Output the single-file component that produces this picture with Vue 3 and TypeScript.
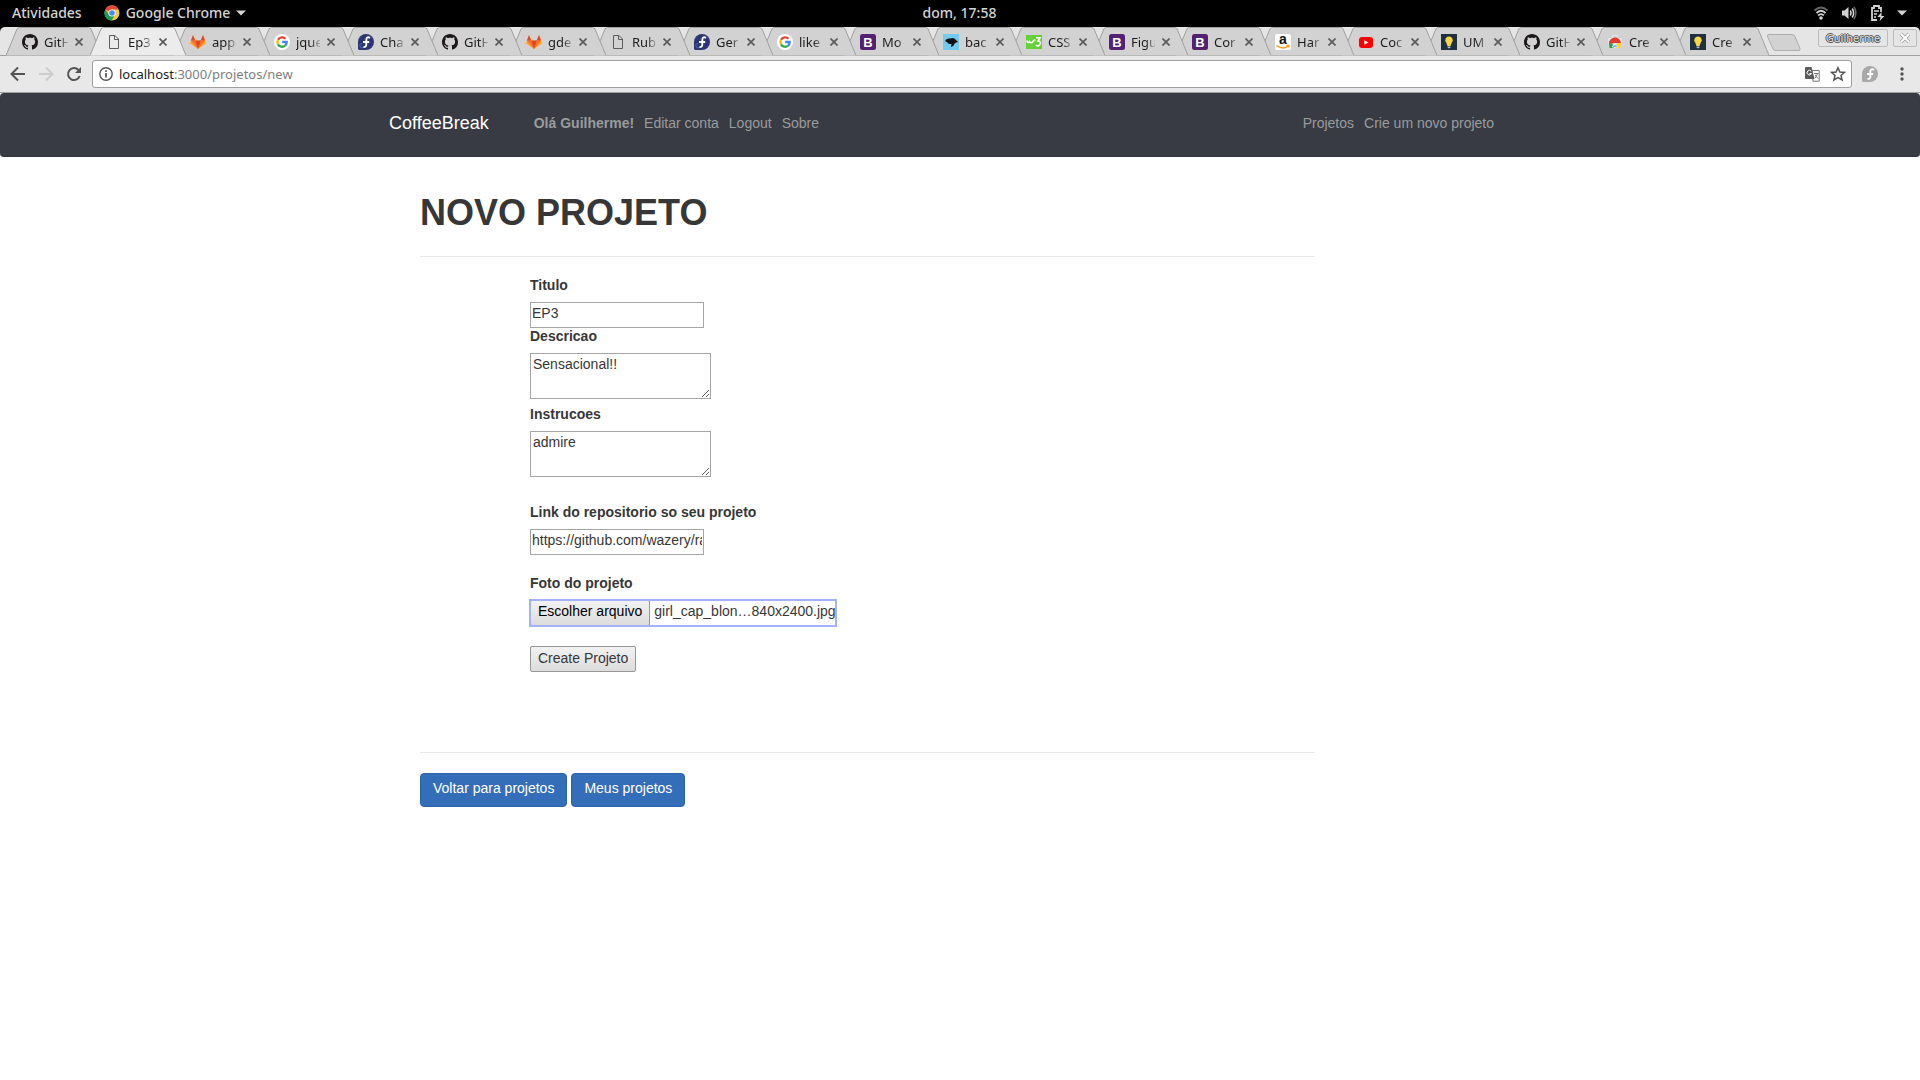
<script setup lang="ts">
import { ref } from 'vue'

type Icon =
  | 'github' | 'file' | 'gitlab' | 'google' | 'fedora' | 'bootstrap' | 'react'
  | 'w3' | 'amazon' | 'youtube' | 'bulb' | 'store'

interface Tab {
  icon: Icon
  title: string
  active?: boolean
}

const tabs: Tab[] = [
  { icon: 'github', title: 'GitH' },
  { icon: 'file', title: 'Ep3', active: true },
  { icon: 'gitlab', title: 'app' },
  { icon: 'google', title: 'jque' },
  { icon: 'fedora', title: 'Cha' },
  { icon: 'github', title: 'GitH' },
  { icon: 'gitlab', title: 'gde' },
  { icon: 'file', title: 'Rub' },
  { icon: 'fedora', title: 'Ger' },
  { icon: 'google', title: 'like' },
  { icon: 'bootstrap', title: 'Mo' },
  { icon: 'react', title: 'bac' },
  { icon: 'w3', title: 'CSS' },
  { icon: 'bootstrap', title: 'Figu' },
  { icon: 'bootstrap', title: 'Cor' },
  { icon: 'amazon', title: 'Har' },
  { icon: 'youtube', title: 'Coc' },
  { icon: 'bulb', title: 'UM' },
  { icon: 'github', title: 'GitH' },
  { icon: 'store', title: 'Cre' },
  { icon: 'bulb', title: 'Cre' },
]

const titulo = ref('EP3')
const descricao = ref('Sensacional!!')
const instrucoes = ref('admire')
const link = ref('https://github.com/wazery/ratyrate')
const foto = ref('girl_cap_blon…840x2400.jpg')

function escolher(event: Event) {
  const file = (event.target as HTMLInputElement).files?.[0]
  if (file) foto.value = file.name
}
</script>

<template>
  <div class="desktop">
    <header class="topbar">
      <div class="topbar-side">
        <button type="button" class="top-item">Atividades</button>
        <button type="button" class="top-item app-menu">
          <svg width="16" height="16" viewBox="0 0 16 16">
            <circle cx="8" cy="8" r="7.5" fill="#f5c842" />
            <path d="M8 8 1.2 4.5A7.5 7.5 0 0 1 14.6 4.5H8z" fill="#dd4b3e" />
            <path d="M1.3 4.4A7.5 7.5 0 0 0 7.6 15.5L11 9.8 5 9.5z" fill="#1d9b58" />
            <circle cx="8" cy="8" r="3.6" fill="#fff" />
            <circle cx="8" cy="8" r="2.8" fill="#4a87ee" />
          </svg>
          Google Chrome
          <svg width="10" height="6" viewBox="0 0 10 6"><path d="M0 .5h10L5 5.5z" fill="#d3d3d3" /></svg>
        </button>
      </div>
      <time class="clock">dom, 17:58</time>
      <div class="topbar-side status">
        <svg width="16" height="16" viewBox="0 0 16 16" fill="none" stroke="#d3d3d3" stroke-width="1.8">
          <path d="M1.5 5.5Q8-.5 14.5 5.5" stroke="#666" />
          <path d="M3.500 8Q8 3.500 12.500 8M5.200 10.500Q8 7.800 10.800 10.500" />
          <circle cx="8" cy="13" r="1.8" fill="#d3d3d3" stroke="none" />
        </svg>
        <svg width="16" height="16" viewBox="0 0 16 16" fill="none" stroke-width="1.6">
          <path d="M1 5.500h2.500L7.500 2v12L3.500 10.500H1z" fill="#d3d3d3" />
          <path d="M9.300 5.500q1.500 2.500 0 5M11.200 3.500q2.800 4.500 0 9" stroke="#d3d3d3" />
          <path d="M13 1.800q3.600 6 0 12.400" stroke="#666" />
        </svg>
        <svg width="16" height="16" viewBox="0 0 16 16" fill="none" stroke="#d3d3d3" stroke-width="1.8">
          <path d="M12 7V3H10V1H5V3H3V15H8" /><path d="M5 6H10M5 9H8M5 12H7" stroke-width="1.5" />
          <path d="M12.500 7 8.500 12h3l-.8 4L15.500 11h-3z" fill="#d3d3d3" stroke="none" />
        </svg>
        <svg width="10" height="6" viewBox="0 0 10 6"><path d="M0 .5h10L5 5.5z" fill="#d3d3d3" /></svg>
      </div>
    </header>

    <div class="browser">
      <div class="strip">
        <div class="tabs">
          <div
            v-for="(tab, i) in tabs"
            :key="i"
            class="tab"
            :class="{ active: tab.active }"
            :style="{ zIndex: tab.active ? 50 : 30 - i }"
          >
            <svg class="shape" viewBox="0 0 96 29" preserveAspectRatio="none">
              <path d="M0 28.500 11 2Q12 .5 13.500 .5H82.500Q84 .5 85 2L96 28.500" />
            </svg>
            <svg class="favicon" width="16" height="16" viewBox="0 0 16 16">
              <path
                v-if="tab.icon === 'github'"
                fill="#1b1817"
                d="M8 0C3.580 0 0 3.580 0 8c0 3.540 2.290 6.530 5.470 7.590.4.070.55-.17.55-.38 0-.19-.01-.82-.01-1.490-2.010.37-2.530-.49-2.690-.94-.09-.23-.48-.94-.82-1.130-.28-.15-.68-.52-.01-.53.63-.01 1.080.58 1.230.82.72 1.210 1.870.87 2.330.66.070-.52.28-.87.51-1.070-1.780-.2-3.640-.89-3.640-3.950 0-.87.31-1.590.82-2.150-.08-.2-.36-1.020.080-2.120 0 0 .67-.21 2.200.82.64-.18 1.320-.27 2-.27.68 0 1.360.090 2 .27 1.530-1.040 2.200-.82 2.200-.82.44 1.100.16 1.920.080 2.120.51.56.82 1.270.82 2.150 0 3.070-1.870 3.750-3.650 3.950.29.25.54.73.54 1.480 0 1.070-.01 1.930-.01 2.200 0 .21.15.46.55.38A8.013 8.013 0 0 0 16 8c0-4.420-3.580-8-8-8z"
              />
              <path
                v-else-if="tab.icon === 'file'"
                d="M3.500 1.500H9L12.500 5V14.500H3.500zM8.500 1.500V5.500H12.500"
                fill="none"
                stroke="#5d5d5d"
              />
              <g v-else-if="tab.icon === 'gitlab'">
                <path d="M8 15 0 9.200 3 1 5.200 6.500H10.800L13 1 16 9.200z" fill="#fca326" />
                <path d="M8 15 1 6.500H5.200zM8 15 15 6.500H10.800z" fill="#fc6d26" />
                <path d="M8 15 5.200 6.500H10.800zM3 1 5.200 6.500H1zM13 1 10.800 6.500H15z" fill="#e2432a" />
              </g>
              <g v-else-if="tab.icon === 'google'">
                <circle cx="8" cy="8" r="8" fill="#fff" />
                <g fill="none" stroke-width="2.3">
                  <path d="M4 5.700A4.700 4.700 0 0 1 11.500 4.800" stroke="#ea4335" />
                  <path d="M4 5.700A4.700 4.700 0 0 0 4 10.400" stroke="#fbbc05" />
                  <path d="M4 10.400A4.700 4.700 0 0 0 11.100 11.600" stroke="#34a853" />
                  <path d="M8.200 8H12.700Q12.700 10.400 11.100 11.600" stroke="#4285f4" />
                </g>
              </g>
              <g v-else-if="tab.icon === 'fedora'">
                <path d="M8 0A8 8 0 0 1 8 16H1.500Q0 16 0 14.500V8A8 8 0 0 1 8 0z" fill="#2c3572" />
                <path d="M4 9.300A2.300 2.300 0 1 0 6 13" fill="none" stroke="#4a73b5" />
                <path d="M12 3.800Q8.300 2 8.300 6V10.500Q8.300 13.300 5.500 12.800M5 8H11.200" fill="none" stroke="#fff" stroke-width="1.9" />
              </g>
              <g v-else-if="tab.icon === 'bootstrap'">
                <rect width="16" height="16" rx="2.5" fill="#542070" />
                <text x="8" y="12.5" text-anchor="middle" class="logo-b">B</text>
              </g>
              <g v-else-if="tab.icon === 'react'">
                <rect width="16" height="16" fill="#73caf1" />
                <path d="M2 7Q3 4 7 4.500 11 3 13 6L15 8 12 9Q11 12 8 13L8.500 10Q5 10 4.500 8.500z" fill="#111" />
              </g>
              <g v-else-if="tab.icon === 'w3'">
                <rect width="16" height="14" y="1" fill="#67d13a" />
                <path d="M.8 6.500Q2 10 3.600 7.500Q5 10 7 7.500T9 6.500" fill="none" stroke="#fff" stroke-width="1.6" />
                <path d="M10 3.800H14L12 7Q14.800 7.200 14.300 9.800Q13 13 9.800 11.200" fill="none" stroke="#fff" stroke-width="1.6" />
              </g>
              <g v-else-if="tab.icon === 'amazon'">
                <rect width="16" height="16" rx="2" fill="#fff" />
                <text x="8" y="10" text-anchor="middle" class="logo-a">a</text>
                <path d="M1.500 11.500Q8 16 13 12.500M11.500 11.500H14V13.500" fill="none" stroke="#f79a1c" stroke-width="1.4" />
              </g>
              <g v-else-if="tab.icon === 'youtube'">
                <rect x="1" y="3" width="14" height="11" rx="3" fill="#f00" />
                <path d="M6.300 6.200 10.500 8.500 6.300 10.800z" fill="#fff" />
              </g>
              <g v-else-if="tab.icon === 'bulb'">
                <rect width="16" height="16" fill="#20303f" />
                <path d="M8 2.500A3.600 3.600 0 0 1 10.800 8.500L9.500 12H6.500L5.200 8.500A3.600 3.600 0 0 1 8 2.500z" fill="#f7d547" />
                <path d="M6.500 12.500H9.500V13.500L8 14.500 6.500 13.500z" fill="#b9bec2" />
              </g>
              <g v-else>
                <path d="M1 4H15L14 14H2z" fill="#e8e8e8" />
                <path d="M5.500 4V1.500H10.500V4" fill="none" stroke="#e8e8e8" />
                <path d="M2 10A6 6 0 0 1 14 9H8z" fill="#e03c31" />
                <path d="M2 10 2.500 14H7L5 9z" fill="#26a148" />
                <path d="M14 9 13.500 14H8L10 9z" fill="#fbd12b" />
                <path d="M5 13A3.200 3.200 0 0 1 11 13z" fill="#4a80f0" stroke="#fff" stroke-width=".7" />
              </g>
            </svg>
            <span class="tab-title">{{ tab.title }}</span>
            <button type="button" class="tab-close" aria-label="Fechar">
              <svg width="8" height="8" viewBox="0 0 8 8"><path d="M.5.5 7.500 7.500M7.500.5.5 7.500" stroke="#5b5b5b" stroke-width="1.7" /></svg>
            </button>
          </div>
          <button type="button" class="new-tab" aria-label="Nova guia">
            <svg width="36" height="18" viewBox="0 0 36 18">
              <path d="M3 .5H26Q28 .5 29 2.500L34 14.500Q34.500 16.500 33 16.500H10Q8 16.500 7 15L1.500 2.500Q1 .5 3 .5z" fill="#d2d2d2" stroke="#adadad" />
            </svg>
          </button>
        </div>
        <div class="window-controls">
          <button type="button" class="profile">Guilherme</button>
          <button type="button" class="win-close" aria-label="Fechar janela">
            <svg width="12" height="12" viewBox="0 0 12 12">
              <path d="M2 2 10 10M10 2 2 10" stroke="#a4a4a4" stroke-width="3.6" />
              <path d="M2 2 10 10M10 2 2 10" stroke="#fff" stroke-width="1.8" />
            </svg>
          </button>
        </div>
      </div>

      <div class="toolbar">
        <button type="button" class="tool" aria-label="Voltar">
          <svg width="16" height="16" viewBox="0 0 16 16"><path d="M15 8H2M8 1.500 1.500 8 8 14.500" fill="none" stroke="#545454" stroke-width="2" /></svg>
        </button>
        <button type="button" class="tool" aria-label="Avançar">
          <svg width="16" height="16" viewBox="0 0 16 16"><path d="M1 8H14M8 1.500 14.500 8 8 14.500" fill="none" stroke="#cdcdcd" stroke-width="2" /></svg>
        </button>
        <button type="button" class="tool" aria-label="Recarregar">
          <svg width="16" height="16" viewBox="0 0 16 16">
            <path d="M13.700 10A6 6 0 1 1 12.500 4" fill="none" stroke="#545454" stroke-width="2" />
            <path d="M15 1V7H9z" fill="#545454" />
          </svg>
        </button>
        <div class="omnibox">
          <svg width="14" height="14" viewBox="0 0 14 14">
            <circle cx="7" cy="7" r="6.2" fill="none" stroke="#555" stroke-width="1.4" />
            <path d="M7 6V10.500M7 3.300V5" stroke="#555" stroke-width="1.7" />
          </svg>
          <div class="url"><span class="host">localhost</span>:3000/projetos/new</div>
          <button type="button" class="plain" aria-label="Traduzir">
            <svg width="15" height="15" viewBox="0 0 15 15">
              <path d="M7 3.500H14.200V14.200H8z" fill="#fff" stroke="#777" />
              <path d="M1 0H6.500L9.500 12H1Q0 12 0 11V1Q0 0 1 0z" fill="#5b5b5b" />
              <path d="M6.300 4.400A2.300 2.300 0 1 0 6.500 6.500H4.500" fill="none" stroke="#fff" />
              <path d="M9 6.500H13.500M12.500 6.500Q12 9 10 11M10 8 13 11.500" fill="none" stroke="#777" />
            </svg>
          </button>
          <button type="button" class="plain" aria-label="Favoritos">
            <svg width="16" height="16" viewBox="0 0 16 16">
              <path d="M8 1.700 9.900 6 14.500 6.400 11 9.500 12.100 14 8 11.600 3.900 14 5 9.500 1.500 6.400 6.100 6z" fill="none" stroke="#555" stroke-width="1.5" />
            </svg>
          </button>
        </div>
        <button type="button" class="plain" aria-label="Fedora">
          <svg width="16" height="16" viewBox="0 0 16 16">
            <path d="M8 0A8 8 0 0 1 8 16H1.500Q0 16 0 14.500V8A8 8 0 0 1 8 0z" fill="#a9a9a9" />
            <path d="M12 3.800Q8.300 2 8.300 6V10.500Q8.300 13.300 5.500 12.800M5 8H11.200" fill="none" stroke="#fff" stroke-width="1.9" />
          </svg>
        </button>
        <button type="button" class="plain menu" aria-label="Menu">
          <svg width="4" height="14" viewBox="0 0 4 14" fill="#555">
            <circle cx="2" cy="2" r="1.7" /><circle cx="2" cy="7" r="1.7" /><circle cx="2" cy="12" r="1.7" />
          </svg>
        </button>
      </div>
    </div>

    <div class="page">
      <nav class="navbar">
        <div class="container nav-row">
          <a href="#" class="brand">CoffeeBreak</a>
          <div class="nav-links">
            <a href="#"><strong>Olá Guilherme!</strong></a>
            <a href="#">Editar conta</a>
            <a href="#">Logout</a>
            <a href="#">Sobre</a>
          </div>
          <div class="nav-links right">
            <a href="#">Projetos</a>
            <a href="#">Crie um novo projeto</a>
          </div>
        </div>
      </nav>

      <main class="container">
        <div class="content">
          <h1>NOVO PROJETO</h1>
          <hr />
          <form class="form" @submit.prevent>
            <div class="field tight">
              <label for="titulo">Titulo</label>
              <input id="titulo" v-model="titulo" type="text" class="text" />
            </div>
            <div class="field">
              <label for="descricao">Descricao</label>
              <textarea id="descricao" v-model="descricao"></textarea>
            </div>
            <div class="field wide">
              <label for="instrucoes">Instrucoes</label>
              <textarea id="instrucoes" v-model="instrucoes"></textarea>
            </div>
            <div class="field link">
              <label for="link">Link do repositorio so seu projeto</label>
              <input id="link" v-model="link" type="text" class="text" />
            </div>
            <div class="field photo">
              <label for="foto">Foto do projeto</label>
              <div class="file">
                <span class="file-button">Escolher arquivo</span>
                <span class="file-name">{{ foto }}</span>
                <input id="foto" type="file" @change="escolher" />
              </div>
            </div>
            <button type="submit" class="submit">Create Projeto</button>
          </form>
          <hr />
          <div class="actions">
            <a href="#" class="btn">Voltar para projetos</a>
            <a href="#" class="btn">Meus projetos</a>
          </div>
        </div>
      </main>
    </div>
  </div>
</template>

<style>
body {
  margin: 0;
  background: #fff;
}
</style>

<style scoped>
* {
  box-sizing: border-box;
}
.desktop {
  min-height: 100vh;
  overflow-x: hidden;
  font-family: "Liberation Sans", Arial, sans-serif;
  font-size: 14px;
  line-height: 20px;
  color: #373737;
}
svg {
  display: block;
  flex: none;
}
button {
  margin: 0;
  padding: 0;
  border: 0;
  background: none;
  font: inherit;
  color: inherit;
}
.topbar {
  display: flex;
  align-items: center;
  height: 27px;
  padding: 0 13px 2px 12px;
  background: #000;
  color: #d3d3d3;
  font-family: "Noto Sans", sans-serif;
  font-weight: 500;
}
.topbar-side {
  flex: 1;
  display: flex;
  align-items: center;
  gap: 22px;
}
.app-menu {
  display: flex;
  align-items: center;
  gap: 6px;
}
.status {
  justify-content: flex-end;
  gap: 12px;
}
.browser {
  background: #000;
  font-family: "Noto Sans", sans-serif;
  font-size: 13px;
}
.strip {
  display: flex;
  justify-content: space-between;
  height: 29px;
  padding: 0 3px 0 6px;
  border-bottom: 1px solid #a0a0a0;
  border-radius: 5px 5px 0 0;
  background: #e5e5e5;
  color: #1c1c1c;
}
.tabs {
  display: flex;
}
.tab {
  position: relative;
  display: flex;
  align-items: center;
  flex: none;
  width: 83px;
  height: 29px;
  padding: 1px 0 0 16px;
}
.tab:nth-child(-n + 8) {
  width: 84px;
}
.shape {
  position: absolute;
  top: 0;
  left: 0;
  width: calc(100% + 12px);
  height: 29px;
  fill: #d2d2d2;
  stroke: #9f9f9f;
}
.active .shape {
  fill: #ececec;
}
.favicon {
  position: relative;
}
.logo-b {
  font: bold 13px "Liberation Sans", sans-serif;
  fill: #fff;
}
.logo-a {
  font: bold 14px "Liberation Sans", sans-serif;
  fill: #111;
}
.tab-title {
  position: relative;
  flex: none;
  width: 24px;
  margin: 0 7px 0 6px;
  overflow: hidden;
  white-space: nowrap;
  mask-image: linear-gradient(to right, #000 60%, rgba(0, 0, 0, 0.2));
}
.tab-close {
  position: relative;
}
.new-tab {
  position: relative;
  align-self: flex-start;
  margin: 7px 0 0 9px;
}
.window-controls {
  display: flex;
  gap: 5px;
  padding-top: 2px;
}
.profile,
.win-close {
  display: flex;
  align-items: center;
  justify-content: center;
  height: 18px;
  border: 1px solid #bcbcbc;
  border-radius: 2px;
}
.profile {
  width: 70px;
  font-size: 11px;
  color: #ddd;
  text-shadow: 1px 0 #555, -1px 0 #555, 0 1px #555, 0 -1px #555;
}
.win-close {
  width: 24px;
}
.toolbar {
  display: flex;
  align-items: center;
  height: 37px;
  padding: 0 16px 0 10px;
  border-bottom: 1px solid #a0a0a0;
  background: #e8e8e8;
}
.tool {
  margin-right: 12px;
}
.tool:nth-child(3) {
  margin-right: 10px;
}
.omnibox {
  flex: 1;
  display: flex;
  align-items: center;
  height: 28px;
  margin-right: 10px;
  padding: 0 5px 0 6px;
  border: 1px solid #a0a0a0;
  border-radius: 3px;
  background: #fff;
}
.url {
  flex: 1;
  margin-left: 6px;
  color: #808080;
}
.host {
  color: #1c1c1c;
}
.plain + .plain {
  margin-left: 10px;
}
.toolbar > .menu {
  margin-left: 22px;
}
.page {
  background: #fff;
}
.navbar {
  height: 64px;
  border-bottom: 1px solid #30343b;
  border-radius: 4px;
  background: #383b43;
}
.container {
  max-width: 1170px;
  margin: 0 auto;
  padding: 0 15px;
}
.nav-row {
  display: flex;
  align-items: center;
  padding: 20px 15px 0 14px;
}
.navbar a {
  color: #999b9e;
  text-decoration: none;
}
.navbar .brand {
  margin-right: 45px;
  font-size: 18px;
  color: #fff;
}
.nav-links {
  display: flex;
  gap: 10px;
}
.right {
  margin-left: auto;
  margin-right: 36px;
}
.content {
  max-width: 925px;
  padding: 36px 0 36px 30px;
}
h1 {
  margin: 0 0 23px;
  font-size: 36px;
  line-height: 40px;
}
hr {
  height: 1px;
  margin: 0;
  border: 0;
  background: #e9e9e9;
}
.form {
  padding: 18px 0 80px 110px;
}
.field {
  display: flex;
  flex-direction: column;
  align-items: flex-start;
  gap: 7px;
  margin-bottom: 5px;
}
.field.tight {
  margin-bottom: -2px;
}
.field.wide {
  margin-bottom: 25px;
}
.field.link {
  margin-bottom: 18px;
}
.field.photo {
  margin-bottom: 20px;
}
.field label {
  font-weight: bold;
}
.text,
textarea {
  border: 1px solid #a6a6a6;
  border-radius: 0;
  background: #fff;
  font: inherit;
  color: inherit;
}
.text {
  width: 174px;
  height: 26px;
  padding: 0 1px 4px;
}
textarea {
  width: 181px;
  height: 46px;
  padding: 0 2px;
}
.file {
  position: relative;
  display: flex;
  height: 26px;
  outline: 2px solid #a5b2fa;
  outline-offset: -1px;
  line-height: 20px;
}
.file-button,
.submit {
  height: 26px;
  padding: 0 7px;
  border: 1px solid #979797;
  border-radius: 2px;
  background: linear-gradient(#f2f2f2, #dcdcdc);
}
.file-button {
  color: #000;
}
.file-name {
  padding: 1px 0 0 4px;
}
.file input {
  position: absolute;
  inset: 0;
  width: 100%;
  opacity: 0;
}
.submit {
  display: block;
  padding-bottom: 3px;
}
.actions {
  display: flex;
  gap: 4px;
  padding-top: 20px;
}
.btn {
  padding: 4px 12px 8px;
  border: 1px solid #2c62a8;
  border-radius: 4px;
  background: #356eb8;
  color: #fff;
  text-decoration: none;
}
</style>
